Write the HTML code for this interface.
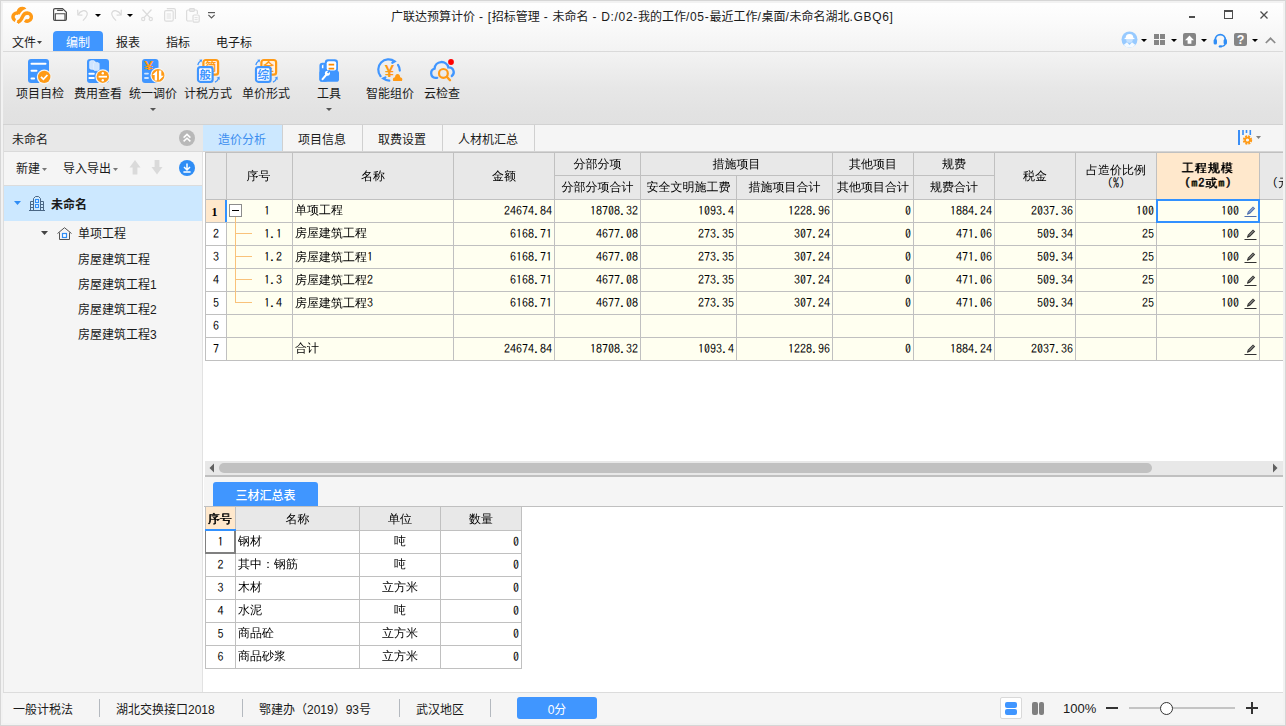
<!DOCTYPE html>
<html lang="zh-CN"><head><meta charset="utf-8"><title>广联达预算计价</title>
<style>
*{box-sizing:border-box;margin:0;padding:0}
html,body{width:1286px;height:726px;overflow:hidden;background:#f5f5f5}
body{font-family:"Liberation Sans","Noto Sans CJK SC",sans-serif;font-size:12px;color:#1a1a1a;line-height:16px}
#win{position:relative;width:1286px;height:726px;overflow:hidden;background:#f5f5f5}
.a{position:absolute;white-space:nowrap}
.t{position:absolute;white-space:nowrap;height:16px;line-height:16px;margin-top:1px}
.t.n,.t.c,.t.s{margin-top:-1px}
.n{font-family:"IPAGothic","Liberation Mono",monospace;color:#000}
.c{font-family:"Liberation Serif","WenQuanYi Zen Hei",sans-serif;color:#000}
.l{letter-spacing:.68px}
.s{font-family:"Liberation Serif","Noto Serif CJK SC",serif}
svg{position:absolute;overflow:visible}
</style></head>
<body>
<div id="win">
<div class="a" style="left:0;top:0;width:1286px;height:726px;border:1px solid #d6d6d6;z-index:50;pointer-events:none"></div>
<div class="a" style="left:1px;top:1px;width:1284px;height:724px;border:2px solid #f2f2f2;z-index:50;pointer-events:none"></div>
<div id="titlebar">
<div class="a" style="left:0;top:0;width:1286px;height:51px;background:linear-gradient(#ffffff,#fafafa 45%,#f3f3f3)"></div>
<div class="t" style="left:391px;top:8px"><span>广联达预算计价</span><span class="l"> - [</span>招标管理<span class="l"> - </span>未命名<span class="l"> - D:/02-</span>我的工作<span class="l">/05-</span>最近工作<span class="l">/</span>桌面<span class="l">/</span>未命名湖北<span class="l">.GBQ6]</span></div>
<svg style="left:0px;top:0px" width="40" height="28" viewBox="0 0 40 28"><path d="M15.400 20.500A3.900 3.900 0 1 1 18.400 13.300" fill="none" stroke="#ff9a16" stroke-width="3.500"/><path d="M16.600 11.600Q17.600 6.600 22.600 6.700Q25.200 6.900 26.400 8.800Q21.800 9.800 19.600 14.600L17.400 14.200z" fill="#ff9a16"/><path d="M17.600 22.400Q21.200 20.700 22.500 16.800Q23.800 13 27.400 12.900" fill="none" stroke="#fbfbfb" stroke-width="5.500"/><path d="M17.600 22.300Q21.200 20.700 22.500 16.800Q23.800 13 27.400 12.900A4.100 4.100 0 1 1 24.900 20.300" fill="none" stroke="#ff9a16" stroke-width="3.500"/><path d="M16.600 23L18.200 20.600L19.600 23z" fill="#ff9a16"/></svg>
<svg style="left:53px;top:8px" width="14" height="13" viewBox="0 0 14 13"><g fill="none" stroke="#4a4a4a" stroke-width="1.150"><path d="M2 0.650H9.500L13.400 4.200V11.200Q13.400 12.350 12.200 12.350H1.800Q0.600 12.350 0.600 11.200V1.900Q0.600 0.650 2 0.650z"/><path d="M4.100 2.400H9.900M2.300 12.300V5.700H12V12.300"/></g></svg>
<svg style="left:77px;top:9px" width="12" height="12" viewBox="0 0 12 12"><g fill="none" stroke="#d9d9d9" stroke-width="1.200"><path d="M0.700 0.800L0.900 6L5.400 6.200"/><path d="M1.200 5.600C3.400 1.400 8.400 0.400 10 3.600C11.400 6.400 8.400 9 6 11.600"/></g></svg>
<svg style="left:95px;top:14px" width="6" height="3" viewBox="0 0 6 3"><path d="M0 0h6L3 3z" fill="#000"/></svg>
<svg style="left:110px;top:9px" width="12" height="12" viewBox="0 0 12 12"><g fill="none" stroke="#d9d9d9" stroke-width="1.200"><path d="M11.300 0.800L11.100 6L6.600 6.200"/><path d="M10.800 5.600C8.600 1.400 3.600 0.400 2 3.600C0.600 6.400 3.600 9 6 11.600"/></g></svg>
<svg style="left:127px;top:14px" width="6" height="3" viewBox="0 0 6 3"><path d="M0 0h6L3 3z" fill="#000"/></svg>
<svg style="left:141px;top:9px" width="12" height="12" viewBox="0 0 12 12"><g fill="none" stroke="#dcdcdc" stroke-width="1.2"><path d="M1.5 0.5L9.3 9M10.5 0.5L2.7 9"/><circle cx="2.2" cy="10" r="1.6"/><circle cx="9.8" cy="10" r="1.6"/></g></svg>
<svg style="left:164px;top:8px" width="12" height="14" viewBox="0 0 12 14"><g fill="none" stroke="#dcdcdc" stroke-width="1.2"><rect x="0.6" y="2.6" width="8.6" height="10.6" rx="1.5"/><path d="M2.8 0.7H10a1.4 1.4 0 0 1 1.4 1.4V11"/><path d="M2.7 6h4.4M2.7 8h4.4M2.7 10h4.4" stroke-width="0.9"/></g></svg>
<svg style="left:186px;top:8px" width="14" height="15" viewBox="0 0 14 15"><g fill="none" stroke="#dcdcdc" stroke-width="1.2"><path d="M6 13H2a1.4 1.4 0 0 1-1.4-1.4V3.4A1.4 1.4 0 0 1 2 2h8a1.4 1.4 0 0 1 1.4 1.4V6"/><rect x="3.6" y="0.6" width="4.8" height="2.8" rx="0.8"/><rect x="7" y="7" width="6.2" height="7.2" rx="1.2"/><path d="M8.6 9.6h3M8.6 11.6h3" stroke-width="0.9"/></g></svg>
<svg style="left:208px;top:12px" width="7" height="7" viewBox="0 0 7 7"><g fill="none" stroke="#5a5a5a" stroke-width="1.2"><path d="M0 0.6h7"/><path d="M0.4 2.8L3.5 5.9L6.6 2.8"/></g></svg>
<div class="a" style="left:1189px;top:16px;width:6px;height:2px;background:#4d4d4d;"></div>
<div class="a" style="left:1224px;top:10px;width:9px;height:9px;border:1px solid #4d4d4d;border-top-width:2px"></div>
<svg style="left:1260px;top:11px" width="8" height="8" viewBox="0 0 8 8"><path d="M0.5 0.5L7.5 7.5M7.5 0.5L0.5 7.5" stroke="#4d4d4d" stroke-width="1.3" fill="none"/></svg>
</div>
<div id="menubar">
<div class="a" style="left:53px;top:31px;width:50px;height:20px;background:#4096ff;border-radius:4px 4px 0 0"></div>
<div class="t" style="left:12px;top:34px">文件</div>
<div class="t" style="left:66px;top:34px;color:#fff">编制</div>
<div class="t" style="left:116px;top:34px">报表</div>
<div class="t" style="left:166px;top:34px">指标</div>
<div class="t" style="left:216px;top:34px">电子标</div>
<svg style="left:1121px;top:31px" width="17" height="17" viewBox="0 0 17 17"><circle cx="8.500" cy="8.500" r="8" fill="#97caff"/><circle cx="8.500" cy="8.600" r="3.300" fill="#c4e1ff"/><path d="M2.600 13.900L6 11.200L8.500 14L11 11.200L14.400 13.900A8 8 0 0 1 2.600 13.900z" fill="#f4faff"/><path d="M4.600 7.300a3.900 4.300 0 0 1 7.800 0z" fill="#ffffff"/><path d="M3.600 7.500h9.800" stroke="#fff" stroke-width="1.200"/></svg>
<svg style="left:1141px;top:39px" width="6" height="3" viewBox="0 0 6 3"><path d="M0 0h6L3 3z" fill="#000"/></svg>
<svg style="left:1171px;top:39px" width="6" height="3" viewBox="0 0 6 3"><path d="M0 0h6L3 3z" fill="#000"/></svg>
<svg style="left:1201px;top:39px" width="6" height="3" viewBox="0 0 6 3"><path d="M0 0h6L3 3z" fill="#000"/></svg>
<svg style="left:1252px;top:39px" width="6" height="3" viewBox="0 0 6 3"><path d="M0 0h6L3 3z" fill="#000"/></svg>
<div class="a" style="left:1154px;top:34px;width:5px;height:5px;background:#858585;"></div>
<div class="a" style="left:1160px;top:34px;width:5px;height:5px;background:#858585;"></div>
<div class="a" style="left:1154px;top:40px;width:5px;height:5px;background:#858585;"></div>
<div class="a" style="left:1160px;top:40px;width:5px;height:5px;background:#858585;"></div>
<svg style="left:1183px;top:33px" width="13" height="13" viewBox="0 0 13 13"><rect width="13" height="13" rx="2" fill="#858585"/><path d="M6.500 2.400L11 7.200H8.400V10.800H4.600V7.200H2z" fill="#fff"/></svg>
<svg style="left:1213px;top:33px" width="15" height="15" viewBox="0 0 15 15"><g fill="none" stroke="#2f8df5" stroke-width="1.800"><path d="M2.300 8V6.600a5 5 0 0 1 10 0V8"/><path d="M12.300 10c0 2.400-1.600 3.400-4.400 3.400" stroke-width="1.400"/></g><rect x="0.600" y="6" width="3.400" height="5.400" rx="1.500" fill="#2f8df5"/><rect x="10.600" y="6" width="3.400" height="5.400" rx="1.500" fill="#2f8df5"/><ellipse cx="7.400" cy="13.400" rx="1.700" ry="1.200" fill="#2f8df5"/></svg>
<svg style="left:1234px;top:33px" width="13" height="13" viewBox="0 0 13 13"><rect width="13" height="13" rx="2" fill="#858585"/><text x="6.500" y="11.200" text-anchor="middle" font-family="Liberation Sans,sans-serif" font-weight="bold" font-size="12.500" fill="#fff">?</text></svg>
<svg style="left:1265px;top:37px" width="11" height="7" viewBox="0 0 11 7"><path d="M0.8 6L5.5 1.3L10.2 6" fill="none" stroke="#8a8a8a" stroke-width="1.7"/></svg>
<svg style="left:37px;top:41px" width="5" height="3" viewBox="0 0 5 3"><path d="M0 0h5L2.500 3z" fill="#444"/></svg>
</div>
<div id="ribbon">
<div class="a" style="left:0;top:51px;width:1286px;height:74px;background:linear-gradient(#f3f3f3,#e7e7e7 50%,#e2e2e2 85%,#e1e1e1);border-top:1px solid #dadada;border-bottom:1px solid #d2d2d2"></div>
<div class="t" style="left:16px;top:85px">项目自检</div>
<div class="t" style="left:74px;top:85px">费用查看</div>
<div class="t" style="left:129px;top:85px">统一调价</div>
<div class="t" style="left:184px;top:85px">计税方式</div>
<div class="t" style="left:242px;top:85px">单价形式</div>
<div class="t" style="left:317px;top:85px">工具</div>
<div class="t" style="left:366px;top:85px">智能组价</div>
<div class="t" style="left:424px;top:85px">云检查</div>
<svg style="left:28px;top:59px" width="24" height="25" viewBox="0 0 24 25"><rect width="21" height="24" rx="3" fill="#4096ff"/><path d="M3.5 4.7h14M3.5 11.7h5M3.5 19.5h2.6" stroke="#fff" stroke-width="2" stroke-linecap="round"/><circle cx="16.2" cy="17.9" r="7.4" fill="#f4f4f4"/><circle cx="16.2" cy="17.9" r="6.2" fill="#ff9a16"/><path d="M13 17.8l2.4 2.5 4-4.3" fill="none" stroke="#fff" stroke-width="1.8"/></svg>
<svg style="left:87px;top:59px" width="24" height="25" viewBox="0 0 24 25"><rect width="22" height="24" rx="3" fill="#4096ff"/><g fill="#cfe5ff" stroke="#eaf4ff" stroke-width="0.6"><path d="M2.6 2.8c0-1.6 5.6-1.6 5.6 0v6.4c0 1.6-5.6 1.6-5.6 0z"/><path d="M6.4 4.6c0-1.6 5.8-1.6 5.8 0v5.8c0 1.6-5.8 1.6-5.8 0z"/></g><path d="M2.4 14.8h4.4M2.4 19h4.4" stroke="#fff" stroke-width="2" stroke-linecap="round"/><circle cx="15.8" cy="17.7" r="7.4" fill="#f4f4f4"/><circle cx="15.8" cy="17.7" r="6.2" fill="#ff9a16"/><path d="M11.6 17.7h8.4" stroke="#fff" stroke-width="1.8"/><circle cx="15.8" cy="14.2" r="1.2" fill="#fff"/><circle cx="15.8" cy="21.2" r="1.2" fill="#fff"/></svg>
<svg style="left:142px;top:59px" width="24" height="25" viewBox="0 0 24 25"><rect width="16.5" height="24" rx="3" fill="#4096ff"/><text transform="translate(6.7 11.2) scale(1.3 1)" text-anchor="middle" font-family="Liberation Sans,sans-serif" font-weight="bold" font-size="12.5" fill="#ff9a16">¥</text><path d="M3 14.6h3M3 19h3" stroke="#cfe5ff" stroke-width="1.8" stroke-linecap="round"/><circle cx="16" cy="16.4" r="7.6" fill="#f4f4f4"/><circle cx="16" cy="16.4" r="6.4" fill="#ff9a16"/><path d="M15.1 11.400V21.400H12.700V16H10.300z M16.900 21.400V11.400H19.300V16.800H21.700z" fill="#fff"/></svg>
<svg style="left:197px;top:59px" width="23" height="25" viewBox="0 0 23 25"><rect x="6.4" y="1" width="14.7" height="14.7" rx="2.4" fill="#fff3e0" stroke="#ff9a16" stroke-width="2.2"/><text x="13.8" y="12.4" text-anchor="middle" font-family="Liberation Sans,Noto Sans CJK SC,sans-serif" font-size="11" font-weight="bold" fill="#ff9a16">简</text><rect x="1" y="8.2" width="14.600" height="14.600" rx="2.4" fill="#ffffff" stroke="#4096ff" stroke-width="2.2"/><text x="8.3" y="19.800" text-anchor="middle" font-family="Liberation Sans,Noto Sans CJK SC,sans-serif" font-size="11.5" font-weight="bold" fill="#4096ff">般</text><path d="M0.800 6Q1.400 3.400 3.600 2" fill="none" stroke="#4096ff" stroke-width="1.300"/><path d="M2.200 0.800L5.200 0.600L4.400 3.600z" fill="#4096ff"/><path d="M18 23.200Q20.400 22.200 21.200 20" fill="none" stroke="#4096ff" stroke-width="1.300"/><path d="M19.600 18.800L22.600 17.600L22.600 21z" fill="#4096ff"/></svg>
<svg style="left:255px;top:59px" width="23" height="25" viewBox="0 0 23 25"><rect x="6.4" y="1" width="14.7" height="14.7" rx="2.4" fill="#fff3e0" stroke="#ff9a16" stroke-width="2.2"/><text x="13.8" y="12.4" text-anchor="middle" font-family="Liberation Sans,Noto Sans CJK SC,sans-serif" font-size="11" font-weight="bold" fill="#ff9a16">全</text><rect x="1" y="8.2" width="14.600" height="14.600" rx="2.4" fill="#ffffff" stroke="#4096ff" stroke-width="2.2"/><text x="8.3" y="19.800" text-anchor="middle" font-family="Liberation Sans,Noto Sans CJK SC,sans-serif" font-size="11.5" font-weight="bold" fill="#4096ff">综</text><path d="M0.800 6Q1.400 3.400 3.600 2" fill="none" stroke="#4096ff" stroke-width="1.300"/><path d="M2.200 0.800L5.200 0.600L4.400 3.600z" fill="#4096ff"/><path d="M18 23.200Q20.400 22.200 21.200 20" fill="none" stroke="#4096ff" stroke-width="1.300"/><path d="M19.600 18.800L22.600 17.600L22.600 21z" fill="#4096ff"/></svg>
<svg style="left:319px;top:59px" width="21" height="24" viewBox="0 0 21 24"><rect x="0.4" y="3.8" width="9" height="19" rx="3.2" fill="#4096ff"/><rect x="0.4" y="11.400" width="19.600" height="11.400" rx="2.600" fill="#4096ff"/><rect x="5.800" y="0.200" width="13.200" height="13" rx="3.200" fill="#4096ff"/><rect x="7.700" y="2.200" width="9.500" height="9.400" rx="2" fill="#fff"/><path d="M9.600 5.600h5.600M9.600 9.700h5.600" stroke="#ff8a00" stroke-width="1.700"/><path d="M2.900 9.200V6.800Q3.100 5.600 4.400 5.400V9.200z" fill="#fff"/><path d="M5.800 9.600L9 12.600L7 14.400z" fill="#4096ff"/><path d="M3.600 20.200L7.600 15.400" stroke="#fff" stroke-width="2.100" stroke-linecap="round"/><circle cx="8.400" cy="14.200" r="2.500" fill="#fff"/><path d="M8.600 14L10.800 11.400" stroke="#4096ff" stroke-width="1.700"/></svg>
<svg style="left:378px;top:58px" width="26" height="26" viewBox="0 0 26 26"><g fill="none" stroke="#4096ff" stroke-width="2.200" stroke-linecap="round"><path d="M2.600 18.200A10.300 10.300 0 0 1 16.700 3.400l-2.400 1.400"/><path d="M20 6.900A10.300 10.300 0 0 1 21.800 12.600"/><path d="M11.300 22.600A10.300 10.300 0 0 1 5.200 20.400l2.200-1"/></g><text transform="translate(11.400 18.700) scale(1.060 1)" text-anchor="middle" font-family="Liberation Sans,sans-serif" font-weight="bold" font-size="16" fill="#ff9a16">¥</text><path d="M15.200 23Q14 19.800 17 19.200Q17.400 16.100 19.600 16.100Q21.800 16.100 22.200 19.200Q25.200 19.800 24 23z" fill="#ff9a16"/></svg>
<svg style="left:429px;top:58px" width="27" height="26" viewBox="0 0 27 26"><path d="M8.200 19.800H6.400A4.700 4.700 0 0 1 5.600 10.600A7 7 0 0 1 19.400 9.400A4.800 4.800 0 0 1 22.800 18" fill="none" stroke="#4096ff" stroke-width="2.300" stroke-linecap="round"/><circle cx="14.400" cy="15.400" r="4.400" fill="none" stroke="#ff9a16" stroke-width="2.200"/><path d="M17.800 18.800L21 22.200" stroke="#ff9a16" stroke-width="2.400" stroke-linecap="round"/><circle cx="22" cy="4" r="2.900" fill="#ff0000"/></svg>
<svg style="left:150px;top:108px" width="6" height="3" viewBox="0 0 6 3"><path d="M0 0h6L3 3z" fill="#555"/></svg>
<svg style="left:326px;top:108px" width="6" height="3" viewBox="0 0 6 3"><path d="M0 0h6L3 3z" fill="#555"/></svg>
</div>
<div id="sidebar">
<div class="a" style="left:3px;top:125px;width:200px;height:27px;background:#e8e8e8;border-bottom:1px solid #dadada"></div>
<div class="t" style="left:12px;top:131px">未命名</div>
<div class="a" style="left:3px;top:152px;width:201px;height:540px;background:#f5f5f5;border-right:2px solid #e2e2e2"></div>
<div class="t" style="left:16px;top:160px">新建</div>
<div class="t" style="left:63px;top:160px">导入导出</div>
<div class="a" style="left:3px;top:186px;width:199px;height:35px;background:#cce8ff"></div>
<div class="t" style="left:51px;top:196px;font-weight:bold">未命名</div>
<div class="t" style="left:78px;top:225px">单项工程</div>
<div class="t" style="left:78px;top:251px">房屋建筑工程</div>
<div class="t" style="left:78px;top:276px">房屋建筑工程1</div>
<div class="t" style="left:78px;top:301px">房屋建筑工程2</div>
<div class="t" style="left:78px;top:326px">房屋建筑工程3</div>
<div class="a" style="left:3px;top:125px;width:1px;height:567px;background:#dedede;"></div>
<div class="a" style="left:4px;top:185px;width:198px;height:1px;background:#dcdcdc;"></div>
<svg style="left:179px;top:130px" width="16" height="16" viewBox="0 0 16 16"><circle cx="8" cy="8" r="8" fill="#b8b8b8"/><path d="M4.600 7.600L8 4.400L11.400 7.600M4.600 11.400L8 8.200L11.400 11.400" fill="none" stroke="#fff" stroke-width="1.500"/></svg>
<svg style="left:42px;top:168px" width="5" height="3" viewBox="0 0 5 3"><path d="M0 0h5L2.500 3z" fill="#777"/></svg>
<svg style="left:113px;top:168px" width="5" height="3" viewBox="0 0 5 3"><path d="M0 0h5L2.500 3z" fill="#777"/></svg>
<svg style="left:129px;top:160px" width="12" height="15" viewBox="0 0 12 15"><path d="M6 0L11.500 7.500H8.400V14.600H3.600V7.500H0.500z" fill="#dadada"/></svg>
<svg style="left:151px;top:160px" width="12" height="15" viewBox="0 0 12 15"><path d="M6 14.600L11.500 7.100H8.400V0H3.600V7.100H0.500z" fill="#dadada"/></svg>
<svg style="left:179px;top:160px" width="16" height="16" viewBox="0 0 16 16"><circle cx="8" cy="8" r="8" fill="#2f8df5"/><path d="M8 3.600V9.600M5 7L8 10L11 7M4.400 12h7.200" fill="none" stroke="#fff" stroke-width="1.500"/></svg>
<svg style="left:14px;top:201px" width="7" height="4" viewBox="0 0 7 4"><path d="M0 0h7L3.500 4z" fill="#2f8df5"/></svg>
<svg style="left:29px;top:196px" width="16" height="15" viewBox="0 0 16 15"><g fill="none" stroke="#4a6785" stroke-width="1"><path d="M0 14.500h16"/><path d="M4.500 14.500V2.500L6.500 0.500h3L11.500 2.500V14.500"/><path d="M4.500 5.500H1.500V14.500M11.500 5.500h3V14.500"/><path d="M1.500 8.500h3M1.500 11.500h3M11.500 8.500h3M11.500 11.500h3"/></g><rect x="6.500" y="3.500" width="3" height="3" fill="#cfe5ff" stroke="#2f8df5" stroke-width="1"/><rect x="6.500" y="8.500" width="3" height="3" fill="#cfe5ff" stroke="#2f8df5" stroke-width="1"/></svg>
<svg style="left:41px;top:231px" width="7" height="4" viewBox="0 0 7 4"><path d="M0 0h7L3.500 4z" fill="#444"/></svg>
<svg style="left:57px;top:227px" width="15" height="13" viewBox="0 0 15 13"><g fill="none" stroke="#555" stroke-width="1"><path d="M0.500 6.500L7.500 0.700L14.500 6.500"/><path d="M2.500 5.500V12.500H12.500V5.500"/></g><rect x="5.500" y="6.500" width="4" height="4" fill="#fff" stroke="#2f8df5" stroke-width="1.200"/></svg>
</div>
<div id="main">
<div class="a" style="left:203px;top:125px;width:1081px;height:567px;background:#ffffff"></div>
<div class="a" style="left:203px;top:125px;width:1081px;height:27px;background:#f5f5f5;border-bottom:1px solid #d4d4d4"></div>
<div class="a" style="left:203px;top:125px;width:79px;height:26px;background:#cce8ff"></div>
<div class="t" style="left:218px;top:131px;color:#3c8eef">造价分析</div>
<div class="t" style="left:298px;top:131px;color:#1a1a1a">项目信息</div>
<div class="t" style="left:378px;top:131px;color:#1a1a1a">取费设置</div>
<div class="t" style="left:458px;top:131px;color:#1a1a1a">人材机汇总</div>
<div class="a" style="left:282px;top:125px;width:1px;height:26px;background:#d0d0d0"></div>
<div class="a" style="left:362px;top:125px;width:1px;height:26px;background:#d0d0d0"></div>
<div class="a" style="left:442px;top:125px;width:1px;height:26px;background:#d0d0d0"></div>
<div class="a" style="left:534px;top:125px;width:1px;height:26px;background:#d0d0d0"></div>
<div class="a" style="left:205px;top:152px;width:1078px;height:48px;background:#e8e8e8;"></div>
<div class="a" style="left:227px;top:200px;width:1056px;height:160px;background:#fffff0;"></div>
<div class="a" style="left:206px;top:200px;width:20px;height:160px;background:#ffffff;"></div>
<div class="a" style="left:1157px;top:153px;width:102px;height:46px;background:#ffe8cc;"></div>
<div class="a" style="left:206px;top:200px;width:19px;height:22px;background:#ffe8cc;"></div>
<div class="a" style="left:205px;top:152px;width:1078px;height:1px;background:#c0c0c0;"></div>
<div class="a" style="left:205px;top:199px;width:1078px;height:1px;background:#c0c0c0;"></div>
<div class="a" style="left:205px;top:222px;width:1078px;height:1px;background:#c0c0c0;"></div>
<div class="a" style="left:205px;top:245px;width:1078px;height:1px;background:#c0c0c0;"></div>
<div class="a" style="left:205px;top:268px;width:1078px;height:1px;background:#c0c0c0;"></div>
<div class="a" style="left:205px;top:291px;width:1078px;height:1px;background:#c0c0c0;"></div>
<div class="a" style="left:205px;top:314px;width:1078px;height:1px;background:#c0c0c0;"></div>
<div class="a" style="left:205px;top:337px;width:1078px;height:1px;background:#c0c0c0;"></div>
<div class="a" style="left:205px;top:360px;width:1078px;height:1px;background:#c0c0c0;"></div>
<div class="a" style="left:554px;top:175px;width:440px;height:1px;background:#c0c0c0;"></div>
<div class="a" style="left:205px;top:152px;width:1px;height:209px;background:#c0c0c0;"></div>
<div class="a" style="left:226px;top:152px;width:1px;height:209px;background:#c0c0c0;"></div>
<div class="a" style="left:292px;top:152px;width:1px;height:209px;background:#c0c0c0;"></div>
<div class="a" style="left:453px;top:152px;width:1px;height:209px;background:#c0c0c0;"></div>
<div class="a" style="left:554px;top:152px;width:1px;height:209px;background:#c0c0c0;"></div>
<div class="a" style="left:640px;top:152px;width:1px;height:209px;background:#c0c0c0;"></div>
<div class="a" style="left:736px;top:152px;width:1px;height:209px;background:#c0c0c0;"></div>
<div class="a" style="left:832px;top:152px;width:1px;height:209px;background:#c0c0c0;"></div>
<div class="a" style="left:913px;top:152px;width:1px;height:209px;background:#c0c0c0;"></div>
<div class="a" style="left:994px;top:152px;width:1px;height:209px;background:#c0c0c0;"></div>
<div class="a" style="left:1075px;top:152px;width:1px;height:209px;background:#c0c0c0;"></div>
<div class="a" style="left:1156px;top:152px;width:1px;height:209px;background:#c0c0c0;"></div>
<div class="a" style="left:1259px;top:152px;width:1px;height:209px;background:#c0c0c0;"></div>
<div class="a" style="left:736px;top:153px;width:1px;height:22px;background:#e8e8e8;"></div>
<div class="a" style="left:225px;top:200px;width:2px;height:22px;background:#3291ff;"></div>
<div class="t c" style="left:226px;top:169px;width:65px;text-align:center;">序号</div>
<div class="t c" style="left:293px;top:169px;width:160px;text-align:center;">名称</div>
<div class="t c" style="left:454px;top:169px;width:100px;text-align:center;">金额</div>
<div class="t c" style="left:555px;top:157px;width:85px;text-align:center;">分部分项</div>
<div class="t c" style="left:555px;top:180px;width:85px;text-align:center;">分部分项合计</div>
<div class="t c" style="left:641px;top:157px;width:191px;text-align:center;">措施项目</div>
<div class="t c" style="left:641px;top:180px;width:95px;text-align:center;">安全文明施工费</div>
<div class="t c" style="left:737px;top:180px;width:95px;text-align:center;">措施项目合计</div>
<div class="t c" style="left:833px;top:157px;width:80px;text-align:center;">其他项目</div>
<div class="t c" style="left:833px;top:180px;width:80px;text-align:center;">其他项目合计</div>
<div class="t c" style="left:914px;top:157px;width:80px;text-align:center;">规费</div>
<div class="t c" style="left:914px;top:180px;width:80px;text-align:center;">规费合计</div>
<div class="t c" style="left:995px;top:169px;width:80px;text-align:center;">税金</div>
<div class="a c" style="left:1076px;top:164px;width:80px;text-align:center;line-height:12px">占造价比例<br><span class="n">(%)</span></div>
<div class="a c" style="left:1157px;top:161px;width:102px;text-align:center;line-height:14px;color:#000;text-shadow:.7px 0 0 #000;letter-spacing:1px;text-indent:-1px">工程规模<br><span class="n">(m2</span>或<span class="n">m)</span></div>
<div class="a c" style="left:1272px;top:176px;width:11px;overflow:hidden;line-height:12px"><span class="n">(</span>元</div>
<div class="t s" style="left:205px;top:205px;width:19px;text-align:center;font-weight:bold;color:#000">1</div>
<div class="t n" style="left:264px;top:203px;width:28px;text-align:left;">1</div>
<div class="t c" style="left:295px;top:203px;width:158px;text-align:left;">单项工程</div>
<div class="t n" style="left:454px;top:203px;width:98px;text-align:right;">24674.84</div>
<div class="t n" style="left:555px;top:203px;width:83px;text-align:right;">18708.32</div>
<div class="t n" style="left:641px;top:203px;width:93px;text-align:right;">1093.4</div>
<div class="t n" style="left:737px;top:203px;width:93px;text-align:right;">1228.96</div>
<div class="t n" style="left:833px;top:203px;width:78px;text-align:right;">0</div>
<div class="t n" style="left:914px;top:203px;width:78px;text-align:right;">1884.24</div>
<div class="t n" style="left:995px;top:203px;width:78px;text-align:right;">2037.36</div>
<div class="t n" style="left:1076px;top:203px;width:78px;text-align:right;">100</div>
<div class="t n" style="left:1157px;top:203px;width:82px;text-align:right;">100</div>
<svg style="left:1244px;top:205px" width="13" height="12" viewBox="0 0 13 12"><path d="M0.500 11.500H12.500" stroke="#4d6fb0" stroke-width="1" fill="none"/><path d="M3 9.800l0.800-3 5.200-5.400 2.200 2-5.200 5.400z" fill="#4d6fb0"/><path d="M5 7.600L9.600 2.800" stroke="#e8e8e0" stroke-width="0.700"/><path d="M3.300 9.500l0.400-1.300 0.900 0.900z" fill="#4d6fb0" stroke="#4d6fb0" stroke-width="0.100"/></svg>
<div class="t n" style="left:206px;top:226px;width:20px;text-align:center;">2</div>
<div class="t n" style="left:264px;top:226px;width:28px;text-align:left;">1.1</div>
<div class="t c" style="left:295px;top:226px;width:158px;text-align:left;">房屋建筑工程</div>
<div class="t n" style="left:454px;top:226px;width:98px;text-align:right;">6168.71</div>
<div class="t n" style="left:555px;top:226px;width:83px;text-align:right;">4677.08</div>
<div class="t n" style="left:641px;top:226px;width:93px;text-align:right;">273.35</div>
<div class="t n" style="left:737px;top:226px;width:93px;text-align:right;">307.24</div>
<div class="t n" style="left:833px;top:226px;width:78px;text-align:right;">0</div>
<div class="t n" style="left:914px;top:226px;width:78px;text-align:right;">471.06</div>
<div class="t n" style="left:995px;top:226px;width:78px;text-align:right;">509.34</div>
<div class="t n" style="left:1076px;top:226px;width:78px;text-align:right;">25</div>
<div class="t n" style="left:1157px;top:226px;width:82px;text-align:right;">100</div>
<svg style="left:1244px;top:228px" width="13" height="12" viewBox="0 0 13 12"><path d="M0.500 11.500H12.500" stroke="#333333" stroke-width="1" fill="none"/><path d="M3 9.800l0.800-3 5.200-5.400 2.200 2-5.200 5.400z" fill="#333333"/><path d="M5 7.600L9.600 2.800" stroke="#e8e8e0" stroke-width="0.700"/><path d="M3.300 9.500l0.400-1.300 0.900 0.900z" fill="#333333" stroke="#333333" stroke-width="0.100"/></svg>
<div class="t n" style="left:206px;top:249px;width:20px;text-align:center;">3</div>
<div class="t n" style="left:264px;top:249px;width:28px;text-align:left;">1.2</div>
<div class="t c" style="left:295px;top:249px;width:158px;text-align:left;">房屋建筑工程<span class="n">1</span></div>
<div class="t n" style="left:454px;top:249px;width:98px;text-align:right;">6168.71</div>
<div class="t n" style="left:555px;top:249px;width:83px;text-align:right;">4677.08</div>
<div class="t n" style="left:641px;top:249px;width:93px;text-align:right;">273.35</div>
<div class="t n" style="left:737px;top:249px;width:93px;text-align:right;">307.24</div>
<div class="t n" style="left:833px;top:249px;width:78px;text-align:right;">0</div>
<div class="t n" style="left:914px;top:249px;width:78px;text-align:right;">471.06</div>
<div class="t n" style="left:995px;top:249px;width:78px;text-align:right;">509.34</div>
<div class="t n" style="left:1076px;top:249px;width:78px;text-align:right;">25</div>
<div class="t n" style="left:1157px;top:249px;width:82px;text-align:right;">100</div>
<svg style="left:1244px;top:251px" width="13" height="12" viewBox="0 0 13 12"><path d="M0.500 11.500H12.500" stroke="#333333" stroke-width="1" fill="none"/><path d="M3 9.800l0.800-3 5.200-5.400 2.200 2-5.200 5.400z" fill="#333333"/><path d="M5 7.600L9.600 2.800" stroke="#e8e8e0" stroke-width="0.700"/><path d="M3.300 9.500l0.400-1.300 0.900 0.900z" fill="#333333" stroke="#333333" stroke-width="0.100"/></svg>
<div class="t n" style="left:206px;top:272px;width:20px;text-align:center;">4</div>
<div class="t n" style="left:264px;top:272px;width:28px;text-align:left;">1.3</div>
<div class="t c" style="left:295px;top:272px;width:158px;text-align:left;">房屋建筑工程<span class="n">2</span></div>
<div class="t n" style="left:454px;top:272px;width:98px;text-align:right;">6168.71</div>
<div class="t n" style="left:555px;top:272px;width:83px;text-align:right;">4677.08</div>
<div class="t n" style="left:641px;top:272px;width:93px;text-align:right;">273.35</div>
<div class="t n" style="left:737px;top:272px;width:93px;text-align:right;">307.24</div>
<div class="t n" style="left:833px;top:272px;width:78px;text-align:right;">0</div>
<div class="t n" style="left:914px;top:272px;width:78px;text-align:right;">471.06</div>
<div class="t n" style="left:995px;top:272px;width:78px;text-align:right;">509.34</div>
<div class="t n" style="left:1076px;top:272px;width:78px;text-align:right;">25</div>
<div class="t n" style="left:1157px;top:272px;width:82px;text-align:right;">100</div>
<svg style="left:1244px;top:274px" width="13" height="12" viewBox="0 0 13 12"><path d="M0.500 11.500H12.500" stroke="#333333" stroke-width="1" fill="none"/><path d="M3 9.800l0.800-3 5.200-5.400 2.200 2-5.200 5.400z" fill="#333333"/><path d="M5 7.600L9.600 2.800" stroke="#e8e8e0" stroke-width="0.700"/><path d="M3.300 9.500l0.400-1.300 0.900 0.900z" fill="#333333" stroke="#333333" stroke-width="0.100"/></svg>
<div class="t n" style="left:206px;top:295px;width:20px;text-align:center;">5</div>
<div class="t n" style="left:264px;top:295px;width:28px;text-align:left;">1.4</div>
<div class="t c" style="left:295px;top:295px;width:158px;text-align:left;">房屋建筑工程<span class="n">3</span></div>
<div class="t n" style="left:454px;top:295px;width:98px;text-align:right;">6168.71</div>
<div class="t n" style="left:555px;top:295px;width:83px;text-align:right;">4677.08</div>
<div class="t n" style="left:641px;top:295px;width:93px;text-align:right;">273.35</div>
<div class="t n" style="left:737px;top:295px;width:93px;text-align:right;">307.24</div>
<div class="t n" style="left:833px;top:295px;width:78px;text-align:right;">0</div>
<div class="t n" style="left:914px;top:295px;width:78px;text-align:right;">471.06</div>
<div class="t n" style="left:995px;top:295px;width:78px;text-align:right;">509.34</div>
<div class="t n" style="left:1076px;top:295px;width:78px;text-align:right;">25</div>
<div class="t n" style="left:1157px;top:295px;width:82px;text-align:right;">100</div>
<svg style="left:1244px;top:297px" width="13" height="12" viewBox="0 0 13 12"><path d="M0.500 11.500H12.500" stroke="#333333" stroke-width="1" fill="none"/><path d="M3 9.800l0.800-3 5.200-5.400 2.200 2-5.200 5.400z" fill="#333333"/><path d="M5 7.600L9.600 2.800" stroke="#e8e8e0" stroke-width="0.700"/><path d="M3.300 9.500l0.400-1.300 0.900 0.900z" fill="#333333" stroke="#333333" stroke-width="0.100"/></svg>
<div class="t n" style="left:206px;top:318px;width:20px;text-align:center;">6</div>
<div class="t n" style="left:206px;top:341px;width:20px;text-align:center;">7</div>
<div class="t c" style="left:295px;top:341px;width:158px;text-align:left;">合计</div>
<div class="t n" style="left:454px;top:341px;width:98px;text-align:right;">24674.84</div>
<div class="t n" style="left:555px;top:341px;width:83px;text-align:right;">18708.32</div>
<div class="t n" style="left:641px;top:341px;width:93px;text-align:right;">1093.4</div>
<div class="t n" style="left:737px;top:341px;width:93px;text-align:right;">1228.96</div>
<div class="t n" style="left:833px;top:341px;width:78px;text-align:right;">0</div>
<div class="t n" style="left:914px;top:341px;width:78px;text-align:right;">1884.24</div>
<div class="t n" style="left:995px;top:341px;width:78px;text-align:right;">2037.36</div>
<svg style="left:1244px;top:343px" width="13" height="12" viewBox="0 0 13 12"><path d="M0.500 11.500H12.500" stroke="#333333" stroke-width="1" fill="none"/><path d="M3 9.800l0.800-3 5.200-5.400 2.200 2-5.200 5.400z" fill="#333333"/><path d="M5 7.600L9.600 2.800" stroke="#e8e8e0" stroke-width="0.700"/><path d="M3.300 9.500l0.400-1.300 0.900 0.900z" fill="#333333" stroke="#333333" stroke-width="0.100"/></svg>
<div class="a" style="left:1156px;top:199px;width:104px;height:24px;border:2px solid #3291ff"></div>
<div class="a" style="left:235px;top:217px;width:1px;height:86px;background:#f9c27a;"></div>
<div class="a" style="left:235px;top:233px;width:17px;height:1px;background:#f9c27a;"></div>
<div class="a" style="left:235px;top:256px;width:17px;height:1px;background:#f9c27a;"></div>
<div class="a" style="left:235px;top:279px;width:17px;height:1px;background:#f9c27a;"></div>
<div class="a" style="left:235px;top:302px;width:17px;height:1px;background:#f9c27a;"></div>
<div class="a" style="left:229px;top:204px;width:13px;height:13px;background:#fff;border:1px solid #8c8c8c"></div>
<div class="a" style="left:232px;top:210px;width:7px;height:1px;background:#000;"></div>
<div class="a" style="left:1283px;top:125px;width:3px;height:567px;background:#f2f2f2;"></div>
<div class="a" style="left:205px;top:461px;width:1079px;height:14px;background:#e8e8e8;"></div>
<div class="a" style="left:219px;top:463px;width:933px;height:10px;background:#c1c1c1;border-radius:5px"></div>
<svg style="left:209px;top:463px" width="6" height="10" viewBox="0 0 6 10"><path d="M5 0.5L0.5 5L5 9.5z" fill="#606060"/></svg>
<svg style="left:1272px;top:463px" width="6" height="10" viewBox="0 0 6 10"><path d="M1 0.5L5.5 5L1 9.5z" fill="#606060"/></svg>
<div class="a" style="left:205px;top:475px;width:1079px;height:2px;background:#c0c0c0;"></div>
<div class="a" style="left:204px;top:477px;width:1080px;height:30px;background:#f5f5f5;"></div>
<div class="a" style="left:213px;top:482px;width:105px;height:25px;background:#4096ff;border-radius:3px 3px 0 0"></div>
<div class="t" style="left:213px;top:487px;width:105px;text-align:center;color:#fff;font-weight:500">三材汇总表</div>
<div class="a" style="left:204px;top:506px;width:1080px;height:1px;background:#c0c0c0;"></div>
<div class="a" style="left:205px;top:507px;width:1079px;height:185px;background:#ffffff;"></div>
<div class="a" style="left:206px;top:507px;width:315px;height:23px;background:#e8e8e8;"></div>
<div class="a" style="left:206px;top:507px;width:29px;height:22px;background:#ffe8cc;"></div>
<div class="a" style="left:205px;top:506px;width:317px;height:1px;background:#c0c0c0;"></div>
<div class="a" style="left:205px;top:530px;width:317px;height:1px;background:#c0c0c0;"></div>
<div class="a" style="left:205px;top:553px;width:317px;height:1px;background:#c0c0c0;"></div>
<div class="a" style="left:205px;top:576px;width:317px;height:1px;background:#c0c0c0;"></div>
<div class="a" style="left:205px;top:599px;width:317px;height:1px;background:#c0c0c0;"></div>
<div class="a" style="left:205px;top:622px;width:317px;height:1px;background:#c0c0c0;"></div>
<div class="a" style="left:205px;top:645px;width:317px;height:1px;background:#c0c0c0;"></div>
<div class="a" style="left:205px;top:668px;width:317px;height:1px;background:#c0c0c0;"></div>
<div class="a" style="left:205px;top:506px;width:1px;height:163px;background:#c0c0c0;"></div>
<div class="a" style="left:235px;top:506px;width:1px;height:163px;background:#c0c0c0;"></div>
<div class="a" style="left:359px;top:506px;width:1px;height:163px;background:#c0c0c0;"></div>
<div class="a" style="left:440px;top:506px;width:1px;height:163px;background:#c0c0c0;"></div>
<div class="a" style="left:521px;top:506px;width:1px;height:163px;background:#c0c0c0;"></div>
<div class="a" style="left:205px;top:529px;width:31px;height:2px;background:#3291ff;"></div>
<div class="t c" style="left:205px;top:512px;width:29px;text-align:center;text-shadow:.7px 0 0 #000">序号</div>
<div class="t c" style="left:236px;top:512px;width:123px;text-align:center;">名称</div>
<div class="t c" style="left:360px;top:512px;width:80px;text-align:center;">单位</div>
<div class="t c" style="left:441px;top:512px;width:80px;text-align:center;">数量</div>
<div class="t n" style="left:206px;top:534px;width:29px;text-align:center;">1</div>
<div class="t c" style="left:238px;top:534px;width:120px;text-align:left;">钢材</div>
<div class="t c" style="left:360px;top:534px;width:80px;text-align:center;">吨</div>
<div class="t n" style="left:441px;top:534px;width:78px;text-align:right;">0</div>
<div class="t n" style="left:206px;top:557px;width:29px;text-align:center;">2</div>
<div class="t c" style="left:238px;top:557px;width:120px;text-align:left;">其中：钢筋</div>
<div class="t c" style="left:360px;top:557px;width:80px;text-align:center;">吨</div>
<div class="t n" style="left:441px;top:557px;width:78px;text-align:right;">0</div>
<div class="t n" style="left:206px;top:580px;width:29px;text-align:center;">3</div>
<div class="t c" style="left:238px;top:580px;width:120px;text-align:left;">木材</div>
<div class="t c" style="left:360px;top:580px;width:80px;text-align:center;">立方米</div>
<div class="t n" style="left:441px;top:580px;width:78px;text-align:right;">0</div>
<div class="t n" style="left:206px;top:603px;width:29px;text-align:center;">4</div>
<div class="t c" style="left:238px;top:603px;width:120px;text-align:left;">水泥</div>
<div class="t c" style="left:360px;top:603px;width:80px;text-align:center;">吨</div>
<div class="t n" style="left:441px;top:603px;width:78px;text-align:right;">0</div>
<div class="t n" style="left:206px;top:626px;width:29px;text-align:center;">5</div>
<div class="t c" style="left:238px;top:626px;width:120px;text-align:left;">商品砼</div>
<div class="t c" style="left:360px;top:626px;width:80px;text-align:center;">立方米</div>
<div class="t n" style="left:441px;top:626px;width:78px;text-align:right;">0</div>
<div class="t n" style="left:206px;top:649px;width:29px;text-align:center;">6</div>
<div class="t c" style="left:238px;top:649px;width:120px;text-align:left;">商品砂浆</div>
<div class="t c" style="left:360px;top:649px;width:80px;text-align:center;">立方米</div>
<div class="t n" style="left:441px;top:649px;width:78px;text-align:right;">0</div>
<div class="a" style="left:205px;top:531px;width:31px;height:23px;border:solid #808080;border-width:0 2px 2px 1px"></div>
<svg style="left:1238px;top:130px" width="16" height="16" viewBox="0 0 16 16"><path d="M1 0v15" stroke="#3a8ef6" stroke-width="2"/><path d="M5 0v5M8.500 0v3M12.300 0v5" stroke="#3a8ef6" stroke-width="1.600"/><circle cx="9.500" cy="10" r="3.400" fill="none" stroke="#ff9a16" stroke-width="2.600" stroke-dasharray="1.800 0.900"/><circle cx="9.500" cy="10" r="2.400" fill="none" stroke="#ff9a16" stroke-width="1.600"/></svg>
<svg style="left:1256px;top:136px" width="5" height="3" viewBox="0 0 5 3"><path d="M0 0h5L2.500 3z" fill="#808080"/></svg>
</div>
<div id="statusbar">
<div class="a" style="left:0;top:692px;width:1286px;height:34px;background:#f5f5f5;border-top:1px solid #dcdcdc"></div>
<div class="t" style="left:13px;top:701px">一般计税法</div>
<div class="t" style="left:116px;top:701px">湖北交换接口2018</div>
<div class="t" style="left:259px;top:701px">鄂建办（2019）93号</div>
<div class="t" style="left:416px;top:701px">武汉地区</div>
<div class="a" style="left:517px;top:697px;width:80px;height:22px;background:#4096ff;border-radius:3px"></div>
<div class="t" style="left:517px;top:701px;width:80px;text-align:center;color:#fff">0分</div>
<div class="t" style="left:1063px;top:700px;font-size:13px">100%</div>
<div class="a" style="left:99px;top:699px;width:1px;height:18px;background:#b4b9bf;"></div>
<div class="a" style="left:242px;top:699px;width:1px;height:18px;background:#b4b9bf;"></div>
<div class="a" style="left:399px;top:699px;width:1px;height:18px;background:#b4b9bf;"></div>
<div class="a" style="left:490px;top:699px;width:1px;height:18px;background:#b4b9bf;"></div>
<div class="a" style="left:1000px;top:697px;width:22px;height:22px;background:#fff;border:1px solid #d9d9d9;border-radius:2px"></div>
<div class="a" style="left:1005px;top:702px;width:12px;height:6px;background:#4096ff;border-radius:2px"></div>
<div class="a" style="left:1005px;top:709px;width:12px;height:6px;background:#4096ff;border-radius:2px"></div>
<div class="a" style="left:1032px;top:702px;width:6px;height:13px;background:#808080;border-radius:2px"></div>
<div class="a" style="left:1039px;top:702px;width:5px;height:13px;background:#808080;border-radius:2px"></div>
<div class="a" style="left:1106px;top:707px;width:12px;height:2px;background:#333;"></div>
<div class="a" style="left:1129px;top:707px;width:106px;height:2px;background:#c4c4c4;"></div>
<div class="a" style="left:1160px;top:702px;width:13px;height:13px;background:#fff;border:1.5px solid #333;border-radius:50%"></div>
<div class="a" style="left:1246px;top:707px;width:12px;height:2px;background:#333;"></div>
<div class="a" style="left:1251px;top:702px;width:2px;height:12px;background:#333;"></div>
</div>
</div>
</body></html>
